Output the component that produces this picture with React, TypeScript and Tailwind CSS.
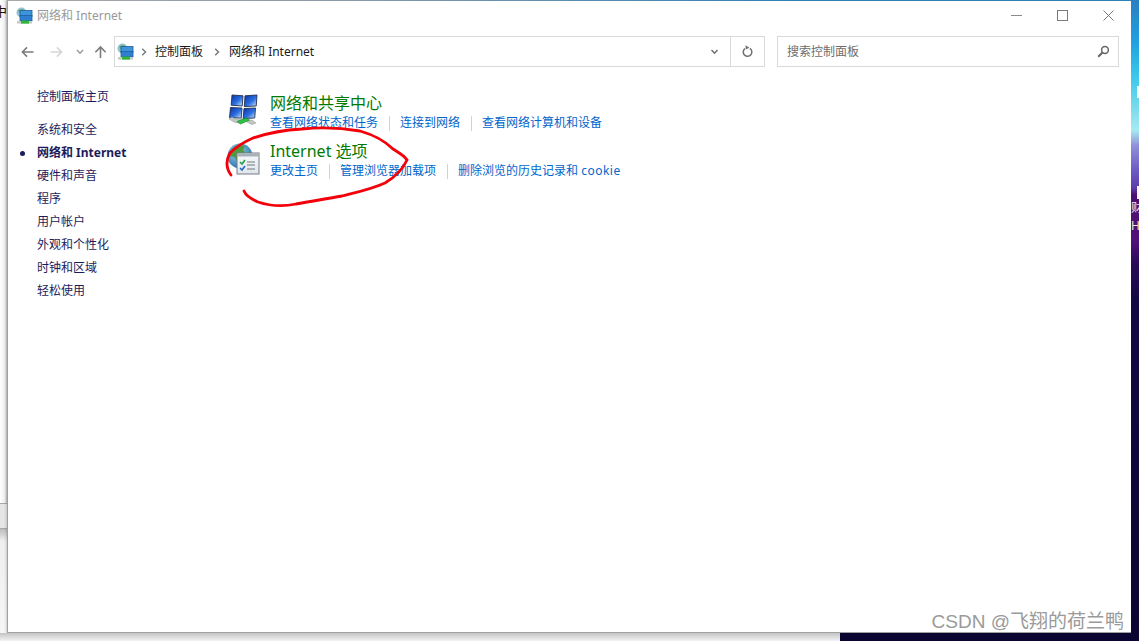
import React from "react";

const font = { fontFamily: '"Noto Sans","Noto Sans CJK SC",sans-serif' };

function NetSmall() {
  return (
    <svg width="17" height="17" viewBox="0 0 17 17" className="shrink-0">
      <circle cx="5.5" cy="5.5" r="5" fill="#8fc3d8" />
      <path d="M2 3.5q3-2.5 6-1l-1 2.5-3 2z" fill="#5fa63f" opacity=".7" />
      <rect x="4" y="3.5" width="12" height="6" fill="#3d93dc" stroke="#1f5f9c" strokeWidth=".8" />
      <rect x="4" y="8.5" width="12" height="5.5" fill="#2f7fd0" stroke="#1f5f9c" strokeWidth=".8" />
      <rect x="1" y="14" width="15" height="2.6" fill="#c9ccc9" />
      <rect x="5" y="13.6" width="8" height="3" fill="#2fb53a" />
    </svg>
  );
}

function NetBig() {
  return (
    <svg width="32" height="34" viewBox="0 0 32 34" className="shrink-0">
      <defs>
        <linearGradient id="tile" x1="0" y1="0" x2="1" y2="1">
          <stop offset="0" stopColor="#0b2fa8" />
          <stop offset=".55" stopColor="#2a6fe0" />
          <stop offset="1" stopColor="#d6ecfb" />
        </linearGradient>
      </defs>
      <g stroke="#23304f" strokeWidth=".9" fill="url(#tile)">
        <path d="M5 2l11 .8-.8 10.2-11-.8z" />
        <path d="M18 2.8l12-.8-.8 11-11.9.6z" />
        <path d="M3.5 14.5l11.5.6-.8 10-11.7-.5z" />
        <path d="M17 15.5l11.5-.5-.8 10-11.5.5z" />
      </g>
      <path d="M2 26l6 3.5 6 .5 5-1.5 6 3 4-1.5-4-3-6 .5-5-2-6 .5-3-2z" fill="#bfc6c4" stroke="#8a9290" strokeWidth=".5" />
      <path d="M10 28.5l9-3.5 3.5 2-9 4z" fill="#2dc23f" stroke="#128a22" strokeWidth=".6" />
    </svg>
  );
}

function InetBig() {
  return (
    <svg width="34" height="34" viewBox="0 0 34 34" className="shrink-0">
      <defs>
        <radialGradient id="globe" cx=".4" cy=".35" r=".7">
          <stop offset="0" stopColor="#9fd4ee" />
          <stop offset="1" stopColor="#1f6ea8" />
        </radialGradient>
        <linearGradient id="win" x1="0" y1="0" x2="0" y2="1">
          <stop offset="0" stopColor="#f8fafc" />
          <stop offset="1" stopColor="#dfe5ea" />
        </linearGradient>
      </defs>
      <circle cx="13" cy="14" r="12.5" fill="url(#globe)" />
      <path d="M7 5q5-3 11-1l-2 4 3 3-4 2-1 5-4 1-3-4-4-1q0-6 4-9z" fill="#4f9a3e" />
      <rect x="10" y="11" width="22" height="21" fill="url(#win)" stroke="#747c84" strokeWidth="1" />
      <rect x="10.5" y="11.5" width="21" height="3" fill="#a9b1b8" />
      <path d="M13 20l2 2 3-4" fill="none" stroke="#1f9a46" strokeWidth="1.5" />
      <path d="M13 26l2 2 3-4" fill="none" stroke="#2166c0" strokeWidth="1.5" />
      <path d="M20 20h8M20 23h8M20 27h8" stroke="#6f7880" strokeWidth="1.1" />
    </svg>
  );
}

function Arrow({ color, flip }: { color: string; flip?: boolean }) {
  return (
    <svg width="13" height="12" viewBox="0 0 14 12" className={flip ? "rotate-180" : ""}>
      <path d="M13.5 6H1.5M6.5 1L1.5 6l5 5" fill="none" stroke={color} strokeWidth="1.7" />
    </svg>
  );
}

function Chevron({ color, w = 8 }: { color: string; w?: number }) {
  return (
    <svg width={w} height="6" viewBox="0 0 8 6">
      <path d="M1 1l3 3.2L7 1" fill="none" stroke={color} strokeWidth="1.5" />
    </svg>
  );
}

function Crumb() {
  return (
    <svg width="6" height="8" viewBox="0 0 6 8" className="shrink-0">
      <path d="M1.2 .8L4.5 4 1.2 7.2" fill="none" stroke="#777" strokeWidth="1.4" />
    </svg>
  );
}

const sideItems = ["系统和安全", "网络和 Internet", "硬件和声音", "程序", "用户帐户", "外观和个性化", "时钟和区域", "轻松使用"];

function Sep() {
  return <span className="w-px h-[15px] bg-[#cfd3d6]" />;
}

function TaskLink({ children }: { children: React.ReactNode }) {
  return <span className="text-[12px] leading-[16px] text-[#0066cc] whitespace-nowrap">{children}</span>;
}

export default function App() {
  return (
    <div className="relative w-[1139px] h-[641px] overflow-hidden flex flex-col bg-[#0a0530]" style={font}>
      <div className="flex h-[633px]">
        {/* background window remnant */}
        <div className="w-[7px] flex flex-col bg-[linear-gradient(90deg,#ffffff_0%,#eeeeee_70%,#c8c8c8_100%)] overflow-hidden">
          <div className="h-[503px] pt-[3px] pl-0">
            <div className="w-[7px] overflow-hidden text-[13px] leading-[16px] text-[#111]">
              <span className="relative left-[-6px]">中</span>
            </div>
          </div>
          <div className="h-[26px] border-y border-[#a8a8a8] bg-[#e6e6e6]" />
          <div className="flex-1 bg-[linear-gradient(180deg,#bdbdbd_0%,#efefef_12px,#f6f6f6_100%)]" />
        </div>

        {/* main window */}
        <div className="w-[1124px] flex flex-col bg-white border-l border-b border-[#a0a0a0] shadow-[0_1px_3px_rgba(0,0,0,0.3)]">
          <div className="h-px bg-[linear-gradient(90deg,#a8a8a8_0%,#8a9aa8_30%,#2f80b8_70%,#2f80b8_100%)]" />
          <div className="h-[29px] flex items-center pl-[8px]">
            <NetSmall />
            <span className="ml-[4px] text-[12px] text-[#999]">网络和 Internet</span>
            <div className="ml-auto flex items-center pr-[17px] gap-[35px]">
              <svg width="11" height="11" viewBox="0 0 11 11"><path d="M0 5.5h11" stroke="#8a8a8a" strokeWidth="1" /></svg>
              <svg width="11" height="11" viewBox="0 0 11 11"><rect x=".5" y=".5" width="10" height="10" fill="none" stroke="#7a7a7a" /></svg>
              <svg width="11" height="11" viewBox="0 0 11 11"><path d="M.5 .5l10 10M10.5 .5l-10 10" stroke="#7a7a7a" strokeWidth="1" /></svg>
            </div>
          </div>
          <div className="h-[31px] mt-[6px] flex items-center">
            <div className="w-[106px] flex items-center pl-[13px]">
              <Arrow color="#7b7b7b" />
              <span className="ml-[16px]"><Arrow color="#d6d6d6" flip /></span>
              <span className="ml-[13px] flex"><Chevron color="#9a9a9a" /></span>
              <svg width="13" height="14" viewBox="0 0 14 14" className="ml-[10px]">
                <path d="M7 13.5V2M1.5 7.2L7 1.6l5.5 5.6" fill="none" stroke="#7b7b7b" strokeWidth="1.7" />
              </svg>
            </div>
            <div className="w-[651px] h-[31px] border border-[#d9d9d9] flex items-center">
              <span className="ml-[2px]"><NetSmall /></span>
              <span className="ml-[7px]"><Crumb /></span>
              <span className="ml-[8px] text-[12px] text-[#1a1a1a]">控制面板</span>
              <span className="ml-[11px]"><Crumb /></span>
              <span className="ml-[9px] text-[12px] text-[#1a1a1a]">网络和 Internet</span>
              <div className="ml-auto h-full w-[31px] flex items-center justify-center"><Chevron color="#6f6f6f" w={9} /></div>
              <div className="h-full w-[34px] border-l border-[#d9d9d9] flex items-center justify-center">
                <svg width="11" height="13" viewBox="0 0 11 13">
                  <path d="M7.8 3.4A4.3 4.3 0 1 1 3 3.6" fill="none" stroke="#6f6f6f" strokeWidth="1.5" />
                  <path d="M3.5 .3l.3 4.2 3.6-1.8z" fill="#6f6f6f" />
                </svg>
              </div>
            </div>
            <div className="ml-[12px] w-[342px] h-[31px] border border-[#d9d9d9] flex items-center pl-[9px] pr-[8px]">
              <span className="text-[12px] text-[#6d6d6d]">搜索控制面板</span>
              <svg width="13" height="13" viewBox="0 0 13 13" className="ml-auto">
                <circle cx="8" cy="5" r="3.4" fill="none" stroke="#666" strokeWidth="1.5" />
                <path d="M5.5 7.5L1.2 11.8" stroke="#666" strokeWidth="2" />
              </svg>
            </div>
          </div>

          <div className="flex-1 flex">
            <aside className="w-[221px] pt-[22px] flex flex-col text-[12px] text-[#1c1c5c]">
              <div className="pl-[29px] h-[16px] leading-[16px]">控制面板主页</div>
              <div className="mt-[17px] flex flex-col gap-[7px]">
                {sideItems.map((s, i) => (
                  <div key={s} className="flex items-center h-[16px] leading-[16px]">
                    <span className="w-[29px] pl-[12px] flex">
                      {i === 1 && <span className="w-[5px] h-[5px] rounded-full bg-[#1c1c5c]" />}
                    </span>
                    <span className={i === 1 ? "font-bold" : ""}>{s}</span>
                  </div>
                ))}
              </div>
            </aside>
            <main className="flex-1 pt-[24px] flex flex-col gap-[6px]">
              <section className="flex h-[42px]">
                <div className="w-[43px] -ml-[2px] pt-[2px]"><NetBig /></div>
                <div className="flex flex-col">
                  <div className="text-[16px] leading-[24px] text-[#007a00]">网络和共享中心</div>
                  <div className="flex items-center gap-[10.5px] h-[16px]">
                    <TaskLink>查看网络状态和任务</TaskLink><Sep />
                    <TaskLink>连接到网络</TaskLink><Sep />
                    <TaskLink>查看网络计算机和设备</TaskLink>
                  </div>
                </div>
              </section>
              <section className="flex h-[42px]">
                <div className="w-[42px] -ml-[2px] pt-[3px] mr-[1px] shrink-0"><InetBig /></div>
                <div className="flex flex-col">
                  <div className="text-[16px] leading-[24px] text-[#007a00]">Internet 选项</div>
                  <div className="flex items-center gap-[10.5px] h-[16px]">
                    <TaskLink>更改主页</TaskLink><Sep />
                    <TaskLink>管理浏览器加载项</TaskLink><Sep />
                    <TaskLink>删除浏览的历史记录和 <span className="tracking-[0.5px]">cookie</span></TaskLink>
                  </div>
                </div>
              </section>
            </main>
          </div>
        </div>

        {/* wallpaper */}
        <div className="w-[8px] relative overflow-hidden bg-[linear-gradient(180deg,#2a7fc0_0px,#1f9fe0_40px,#38c6ea_75px,#a6eaf0_130px,#8f8fd8_146px,#6c5cc4_170px,#5b3ea8_188px,#4a1070_195px,#52107a_240px,#2a0a58_262px,#120844_300px,#0a0530_633px)]">
          <div className="absolute left-[6px] top-[86px] w-[2px] h-[12px] bg-[#f4f4f4]" />
          <div className="absolute left-[6px] top-[186px] w-[2px] h-[13px] bg-[#f4f4f4]" />
          <span className="absolute left-0 top-[201px] text-[12px] leading-[14px] text-[#f2f2f2]">财</span>
          <span className="absolute left-0 top-[219px] text-[12px] leading-[14px] text-[#f2e8c0]">H</span>
        </div>
      </div>

      {/* under the window */}
      <div className="flex flex-1">
        <div className="w-[840px] bg-[linear-gradient(180deg,#c4c4c4_0%,#f2f2f2_100%)]" />
        <div className="flex-1 bg-[#0a0530]" />
      </div>

      {/* hand-drawn annotation */}
      <svg className="absolute left-0 top-0 pointer-events-none" width="1139" height="641" viewBox="0 0 1139 641" fill="none">
        <path
          d="M231 175C226 168 226 160 230 153C237 146 244 142 253 138C268 133 284 130 302 129C322 127 342 128 360 131C374 135 385 141 393 149C399 153 405 156 407 160C403 169 395 177 385 183C372 189 358 192 342 196C326 199 312 201 296 204C282 207 270 206 258 202C251 199 246 196 244 191"
          stroke="#f4000a"
          strokeWidth="2.8"
          strokeLinecap="round"
        />
      </svg>

      {/* watermark */}
      <div className="absolute right-[15px] top-[610px] text-[19px] leading-[24px] text-[#9a9a9a] whitespace-nowrap" style={{ fontFamily: '"Liberation Sans","Noto Sans CJK SC",sans-serif' }}>
        CSDN @飞翔的荷兰鸭
      </div>
    </div>
  );
}
